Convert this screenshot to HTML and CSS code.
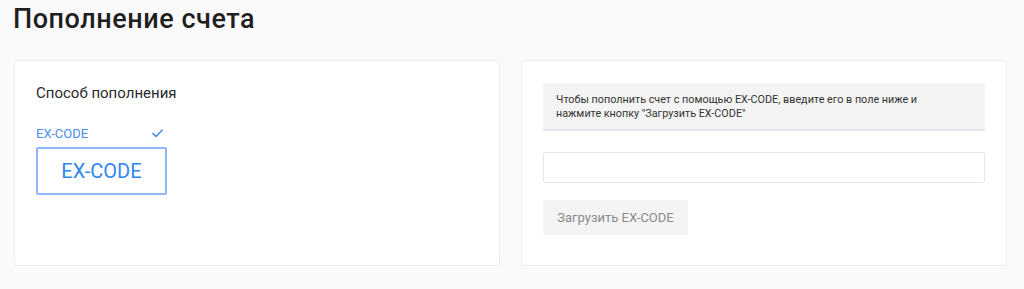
FILE: index.html
```html
<!DOCTYPE html>
<html>
<head>
  <title>Пополнение счета</title>
  <link rel="stylesheet" href="styles.css">
</head>
<body>
  <h1 class="page-title">Пополнение счета</h1>

  <div class="columns">
    <section class="card">
      <h2 class="card-title">Способ пополнения</h2>
      <div class="method">
        <div class="method-label">
          <span>EX-CODE</span>
          <svg class="check" width="11" height="9" viewBox="0 0 11 9">
            <path d="M1 4.6 L4 7.5 L10 1.2" fill="none" stroke="#4a8ef0" stroke-width="1.6" stroke-linecap="round" stroke-linejoin="round"/>
          </svg>
        </div>
        <button class="method-box">EX-CODE</button>
      </div>
    </section>

    <section class="card">
      <div class="notice">
        Чтобы пополнить счет с помощью EX-CODE, введите его в поле ниже и нажмите кнопку "Загрузить EX-CODE"
      </div>
      <input class="code-input" type="text">
      <div>
        <button class="load-btn">Загрузить EX-CODE</button>
      </div>
    </section>
  </div>
</body>
</html>
```

FILE: styles.css
```css
body {
  margin: 0;
  padding: 4px 17px 0 14px;
  background-color: #fafafa;
  font-family: Roboto, "Liberation Sans", sans-serif;
  color: #222;
}

.page-title {
  margin: 0 0 25px -1px;
  font-size: 27px;
  font-weight: 500;
  letter-spacing: 0.55px;
  line-height: 31px;
  color: #1f1f1f;
}

.columns {
  display: grid;
  grid-template-columns: 1fr 1fr;
  gap: 21px;
}

.card {
  background-color: #fff;
  border: 1px solid #ededed;
  border-radius: 3px;
  padding: 22px 21px 30px 21px;
}

.card-title {
  margin: 0;
  font-size: 15px;
  font-weight: 400;
  line-height: 20px;
  color: #2a2a2a;
}

.method {
  width: 131px;
  margin-top: 23px;
}

.method-label {
  display: flex;
  justify-content: space-between;
  align-items: center;
  font-size: 13px;
  line-height: 15px;
  color: #4a8ef0;
  padding-right: 4px;
  margin-bottom: 6px;
}

.method-box {
  display: block;
  width: 131px;
  height: 48px;
  background: #fff;
  border: 2px solid #8fb7f8;
  border-radius: 2px;
  font-family: inherit;
  font-size: 20px;
  color: #2f86f2;
  padding: 0;
}

.notice {
  background-color: #f4f4f4;
  border-bottom: 2px solid #e3e6ee;
  padding: 10px 60px 0 13px;
  height: 36px;
  font-size: 10.8px;
  line-height: 14px;
  color: #333;
}

.code-input {
  display: block;
  box-sizing: border-box;
  width: 100%;
  height: 31px;
  margin: 21px 0 17px 0;
  border: 1px solid #e4e7ee;
  border-radius: 2px;
  background: #fff;
}

.load-btn {
  width: 145px;
  height: 35px;
  border: none;
  border-radius: 2px;
  background-color: #f4f4f4;
  font-family: inherit;
  font-size: 13px;
  color: #8a8a8a;
  padding: 0;
}
```
